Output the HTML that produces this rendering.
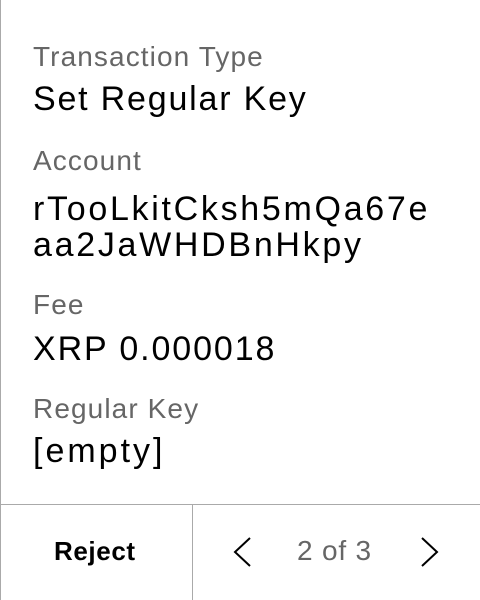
<!DOCTYPE html>
<html><head><meta charset="utf-8"><style>
html,body{margin:0;padding:0;}
body{width:480px;height:600px;position:relative;background:#fff;overflow:hidden;font-family:"Liberation Sans",sans-serif;}
.l{position:absolute;left:33px;font-size:28px;line-height:28px;color:#666;white-space:nowrap;letter-spacing:1.1px;}
.v{position:absolute;left:33px;font-size:34px;line-height:34px;color:#000;white-space:nowrap;letter-spacing:1.8px;}
</style></head><body>
<div style="position:absolute;left:0;top:0;width:1px;height:600px;background:#aaa"></div>
<div class="l" style="top:43px">Transaction Type</div>
<div class="v" style="top:82px">Set Regular Key</div>
<div class="l" style="top:147px">Account</div>
<div class="v" style="top:192px;letter-spacing:2.7px">rTooLkitCksh5mQa67e</div>
<div class="v" style="top:228px;letter-spacing:2.7px">aa2JaWHDBnHkpy</div>
<div class="l" style="top:291px">Fee</div>
<div class="v" style="top:332px;letter-spacing:1.9px">XRP 0.000018</div>
<div class="l" style="top:395px">Regular Key</div>
<div class="v" style="top:434px;letter-spacing:3px">[empty]</div>
<div style="position:absolute;left:0;top:504px;width:480px;height:1px;background:#aaa"></div>
<div style="position:absolute;left:192px;top:504px;width:1px;height:96px;background:#aaa"></div>
<div style="position:absolute;left:54px;top:536px;font-size:26px;line-height:30px;font-weight:bold;color:#000;letter-spacing:0.6px">Reject</div>
<div style="position:absolute;left:297px;top:535px;font-size:28px;line-height:32px;color:#666;letter-spacing:0.8px">2 of 3</div>
<svg style="position:absolute;left:0;top:0" width="480" height="600">
<path d="M250 538 L235 552 L250 566" fill="none" stroke="#000" stroke-width="2"/>
<path d="M422 538 L437 552 L422 566" fill="none" stroke="#000" stroke-width="2"/>
</svg>
</body></html>
